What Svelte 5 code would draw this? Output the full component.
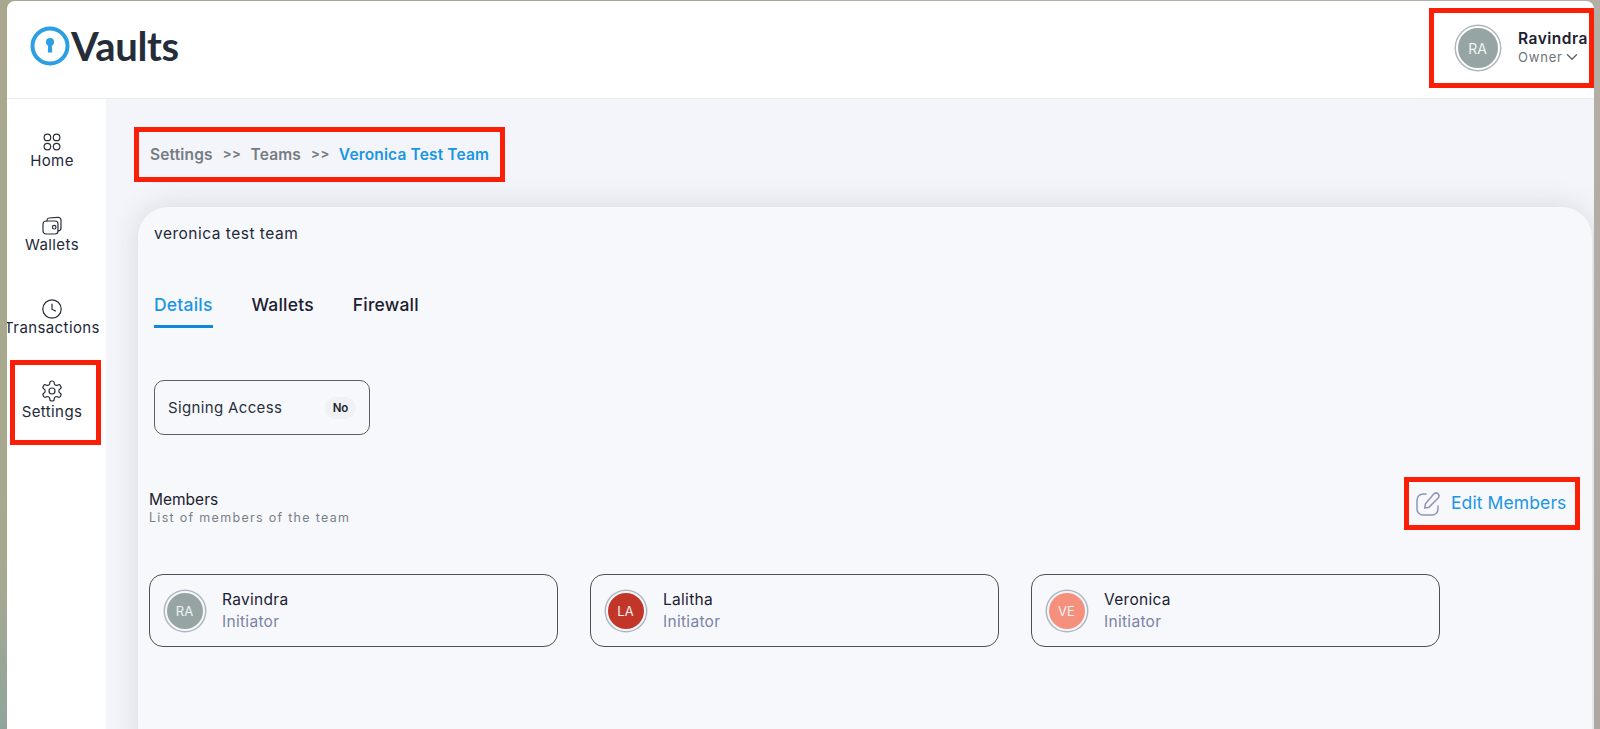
<script lang="ts">
  const nav = [
    { label: 'Home', icon: 'home' },
    { label: 'Wallets', icon: 'wallet' },
    { label: 'Transactions', icon: 'clock' },
    { label: 'Settings', icon: 'gear' }
  ];
  const tabs = ['Details', 'Wallets', 'Firewall'];
  const members = [
    { name: 'Ravindra', initials: 'RA', color: '#96a5a3' },
    { name: 'Lalitha', initials: 'LA', color: '#c13628' },
    { name: 'Veronica', initials: 'VE', color: '#f4907c' }
  ];
</script>

<div class="window">
  <header class="topbar">
    <div class="logo">
      <svg width="40" height="40" viewBox="0 0 40 40" fill="none">
        <circle cx="20" cy="20" r="17.5" stroke="#2b9fe3" stroke-width="4"/>
        <circle cx="20" cy="16" r="4" fill="#2b9fe3"/>
        <path d="M18.3 17h3.4l.5 9.5h-4.4z" fill="#2b9fe3"/>
      </svg>
      <span>Vaults</span>
    </div>
    <div class="user marked">
      <span class="avatar big" style="--bg: #96a5a3">RA</span>
      <div class="user-text">
        <strong>Ravindra</strong>
        <span class="role">Owner
          <svg width="12" height="12" viewBox="0 0 12 12" fill="none" stroke="#5f6670" stroke-width="1.4" stroke-linecap="round" stroke-linejoin="round"><path d="M1.5 3.8 6 8.2l4.5-4.4"/></svg>
        </span>
      </div>
    </div>
  </header>

  <div class="body">
    <nav class="sidebar">
      {#each nav as item}
        <div class="nav-item" class:marked={item.label === 'Settings'}>
          <svg width="24" height="24" viewBox="0 0 24 24" fill="none" stroke="#2b2f3a" stroke-width="1.2" stroke-linecap="round" stroke-linejoin="round">
            {#if item.icon === 'home'}
              <circle cx="7.4" cy="7.4" r="3.3"/>
              <circle cx="16.6" cy="7.4" r="3.3"/>
              <circle cx="7.4" cy="16.6" r="3.3"/>
              <circle cx="16.6" cy="16.6" r="3.3"/>
            {:else if item.icon === 'wallet'}
              <rect x="3" y="7" width="15" height="13" rx="3"/>
              <path d="M7 7V6.2C7 5 7.8 4.2 9 4l9-.6c1.8-.1 3 1 3 2.8v8c0 1.6-1 2.6-3 2.8"/>
              <circle cx="14.2" cy="13.2" r="1.8"/>
            {:else if item.icon === 'clock'}
              <circle cx="12" cy="12" r="9.2"/>
              <path d="M12 7v5.2l3.4 1.8"/>
            {:else}
              <path d="M12.22 2h-.44a2 2 0 0 0-2 2v.18a2 2 0 0 1-1 1.73l-.43.25a2 2 0 0 1-2 0l-.15-.08a2 2 0 0 0-2.73.73l-.22.38a2 2 0 0 0 .73 2.73l.15.1a2 2 0 0 1 1 1.72v.51a2 2 0 0 1-1 1.74l-.15.09a2 2 0 0 0-.73 2.73l.22.38a2 2 0 0 0 2.73.73l.15-.08a2 2 0 0 1 2 0l.43.25a2 2 0 0 1 1 1.73V20a2 2 0 0 0 2 2h.44a2 2 0 0 0 2-2v-.18a2 2 0 0 1 1-1.73l.43-.25a2 2 0 0 1 2 0l.15.08a2 2 0 0 0 2.73-.73l.22-.39a2 2 0 0 0-.73-2.73l-.15-.08a2 2 0 0 1-1-1.74v-.5a2 2 0 0 1 1-1.74l.15-.09a2 2 0 0 0 .73-2.73l-.22-.38a2 2 0 0 0-2.73-.73l-.15.08a2 2 0 0 1-2 0l-.43-.25a2 2 0 0 1-1-1.73V4a2 2 0 0 0-2-2z"/>
              <circle cx="12" cy="12" r="3"/>
            {/if}
          </svg>
          <span>{item.label}</span>
        </div>
      {/each}
    </nav>

    <main class="main">
      <div class="crumbs marked">
        <span>Settings</span>
        <i>&gt;&gt;</i>
        <span>Teams</span>
        <i>&gt;&gt;</i>
        <span class="current">Veronica Test Team</span>
      </div>

      <section class="card">
        <div class="team-name">veronica test team</div>

        <div class="tabs">
          {#each tabs as tab, i}
            <div class="tab" class:active={i === 0}>{tab}</div>
          {/each}
        </div>

        <div class="access">
          <span>Signing Access</span>
          <span class="pill">No</span>
        </div>

        <div class="members-head">
          <div class="members-title">
            <div class="title">Members</div>
            <div class="sub">List of members of the team</div>
          </div>
          <div class="edit marked">
            <svg width="26" height="26" viewBox="0 0 26 26" fill="none" stroke="#8f96b2" stroke-width="1.5" stroke-linecap="round" stroke-linejoin="round">
              <path d="M11 3H8a6 6 0 0 0-6 6v9a6 6 0 0 0 6 6h9a6 6 0 0 0 6-6v-3"/>
              <path d="M19.2 2.6a3 3 0 0 1 4.2 4.2L14.6 15.6a3 3 0 0 1-1.5.8l-3.4.6.6-3.4a3 3 0 0 1 .8-1.5z"/>
            </svg>
            <span>Edit Members</span>
          </div>
        </div>

        <div class="member-list">
          {#each members as m}
            <div class="member">
              <span class="avatar" style="--bg: {m.color}">{m.initials}</span>
              <div class="member-text">
                <div class="name">{m.name}</div>
                <div class="member-role">Initiator</div>
              </div>
            </div>
          {/each}
        </div>
      </section>
    </main>
  </div>
</div>

<style>
  :global(body) {
    margin: 0;
    min-height: 729px;
    background:
      linear-gradient(180deg, #a9a88e 0, #a8a98f 78%, #8fa59c 100%) left top / 50% 100% no-repeat,
      linear-gradient(180deg, #b4afa6 0, #aea9a0 100%) right top / 50% 100% no-repeat;
    font-family: Inter, "Liberation Sans", sans-serif;
    overflow: hidden;
  }

  .window {
    margin: 1px 6px 0 7px;
    height: 728px;
    background: #fff;
    border-radius: 8px 8px 0 0;
    overflow: hidden;
    display: flex;
    flex-direction: column;
  }

  .marked {
    border: 5px solid #fb1f07;
    box-sizing: border-box;
  }

  .topbar {
    height: 98px;
    flex: none;
    box-sizing: border-box;
    border-bottom: 1px solid #ecedf1;
    display: flex;
    justify-content: space-between;
    padding: 7px 0 0 23px;
  }

  .logo {
    display: flex;
    align-items: center;
    height: 76px;
    color: #252d3b;
    font-family: Lato, sans-serif;
    font-weight: 700;
    font-size: 40px;
    letter-spacing: -0.4px;
  }

  .logo span {
    margin-left: 1px;
  }

  .user {
    width: 165px;
    height: 80px;
    display: flex;
    align-items: center;
    padding-left: 20px;
    overflow: hidden;
  }

  .user-text {
    margin-left: 17px;
    display: flex;
    flex-direction: column;
    white-space: nowrap;
  }

  .user-text strong {
    font-size: 15.5px;
    font-weight: 600;
    letter-spacing: 0.5px;
    line-height: 18px;
    color: #1b2130;
  }

  .role {
    display: flex;
    align-items: center;
    gap: 3px;
    font-size: 13px;
    line-height: 18px;
    letter-spacing: 0.8px;
    color: #6d737c;
  }

  .avatar {
    flex: none;
    width: 40px;
    height: 40px;
    margin: 0 1.5px;
    border-radius: 50%;
    background: var(--bg);
    color: #f1f3f3;
    font-size: 13px;
    display: flex;
    align-items: center;
    justify-content: center;
    box-sizing: border-box;
    border: 2px solid #f6f7fb;
    box-shadow: 0 0 0 1.5px #aeb6c2;
  }

  .avatar.big {
    width: 44px;
    height: 44px;
    font-size: 14px;
    border-color: #fff;
  }

  .body {
    flex: 1;
    display: flex;
    min-height: 0;
  }

  .sidebar {
    width: 99px;
    flex: none;
    padding-top: 31px;
    box-sizing: border-box;
  }

  .nav-item {
    width: 90px;
    height: 83.5px;
    display: flex;
    flex-direction: column;
    align-items: center;
    font-size: 15px;
    letter-spacing: 0.4px;
    line-height: 20px;
    color: #23293a;
    white-space: nowrap;
  }

  .nav-item span {
    margin-top: -3px;
  }

  .nav-item.marked {
    width: 91px;
    height: 85px;
    margin: -20.5px 0 0 3px;
    padding: 14px 7px 0 0;
  }

  .nav-item.marked span {
    margin-top: -1px;
  }

  .main {
    flex: 1;
    min-width: 0;
    background: #f4f5fa;
    padding: 28px 2px 0 27px;
  }

  .crumbs {
    width: 371px;
    height: 55px;
    margin-left: 1px;
    display: flex;
    align-items: center;
    gap: 9px;
    padding-left: 11px;
    font-size: 15.5px;
    letter-spacing: 0.15px;
    font-weight: 600;
    color: #767c82;
    white-space: nowrap;
  }

  .crumbs i {
    font-style: normal;
    font-size: 13px;
    font-weight: 700;
    letter-spacing: 0.6px;
    margin: -3px 0 0 1px;
  }

  .current {
    color: #1a96e3;
  }

  .card {
    margin: 25px 0 0 5px;
    height: 540px;
    padding: 16px 13px 0 16px;
    box-sizing: border-box;
    background: #f7f8fc;
    border-radius: 30px 30px 0 0;
    box-shadow: 0 0 30px rgba(40, 44, 60, 0.14);
  }

  .team-name {
    font-size: 15.5px;
    letter-spacing: 0.5px;
    line-height: 22px;
    color: #23293a;
  }

  .tabs {
    display: flex;
    gap: 39px;
    margin-top: 48px;
  }

  .tab {
    font-size: 17.5px;
    letter-spacing: 0.2px;
    font-weight: 500;
    line-height: 24px;
    padding-bottom: 8px;
    border-bottom: 3px solid transparent;
    color: #1b2130;
  }

  .tab.active {
    color: #1a96e3;
    border-bottom-color: #0f88dc;
  }

  .access {
    margin-top: 52px;
    width: 216px;
    height: 55px;
    box-sizing: border-box;
    border: 1px solid #5c5f67;
    border-radius: 10px;
    display: flex;
    align-items: center;
    justify-content: space-between;
    padding: 0 13px;
    font-size: 15px;
    letter-spacing: 0.35px;
    color: #2a303c;
  }

  .pill {
    width: 31px;
    height: 22px;
    border-radius: 11px;
    background: #f0f1f4;
    color: #20242e;
    font-size: 11.5px;
    letter-spacing: 0;
    font-weight: 600;
    display: flex;
    align-items: center;
    justify-content: center;
  }

  .members-head {
    margin: 42px 0 0 -5px;
    display: flex;
    justify-content: space-between;
    align-items: flex-start;
  }

  .members-title {
    padding-top: 14px;
  }

  .title {
    font-size: 15.5px;
    line-height: 18px;
    color: #1b2130;
  }

  .sub {
    font-size: 12.5px;
    line-height: 18px;
    letter-spacing: 1.3px;
    color: #7a7f87;
  }

  .edit {
    width: 176px;
    height: 53px;
    margin-right: -1px;
    display: flex;
    align-items: center;
    gap: 10px;
    padding-left: 6px;
    font-size: 17.5px;
    letter-spacing: 0.1px;
    color: #1a96e3;
    white-space: nowrap;
  }

  .edit span {
    margin-bottom: 3px;
  }

  .member-list {
    margin: 44px 0 0 -5px;
    display: flex;
    gap: 32px;
  }

  .member {
    width: 409px;
    height: 73px;
    box-sizing: border-box;
    border: 1px solid #4c4f57;
    border-radius: 14px;
    display: flex;
    align-items: center;
    padding-left: 13px;
  }

  .member-text {
    margin-left: 16px;
  }

  .name {
    font-size: 15.5px;
    letter-spacing: 0.3px;
    line-height: 23px;
    color: #1b2130;
  }

  .member-role {
    font-size: 15.5px;
    letter-spacing: 0.3px;
    line-height: 22px;
    color: #7a82a5;
  }
</style>
